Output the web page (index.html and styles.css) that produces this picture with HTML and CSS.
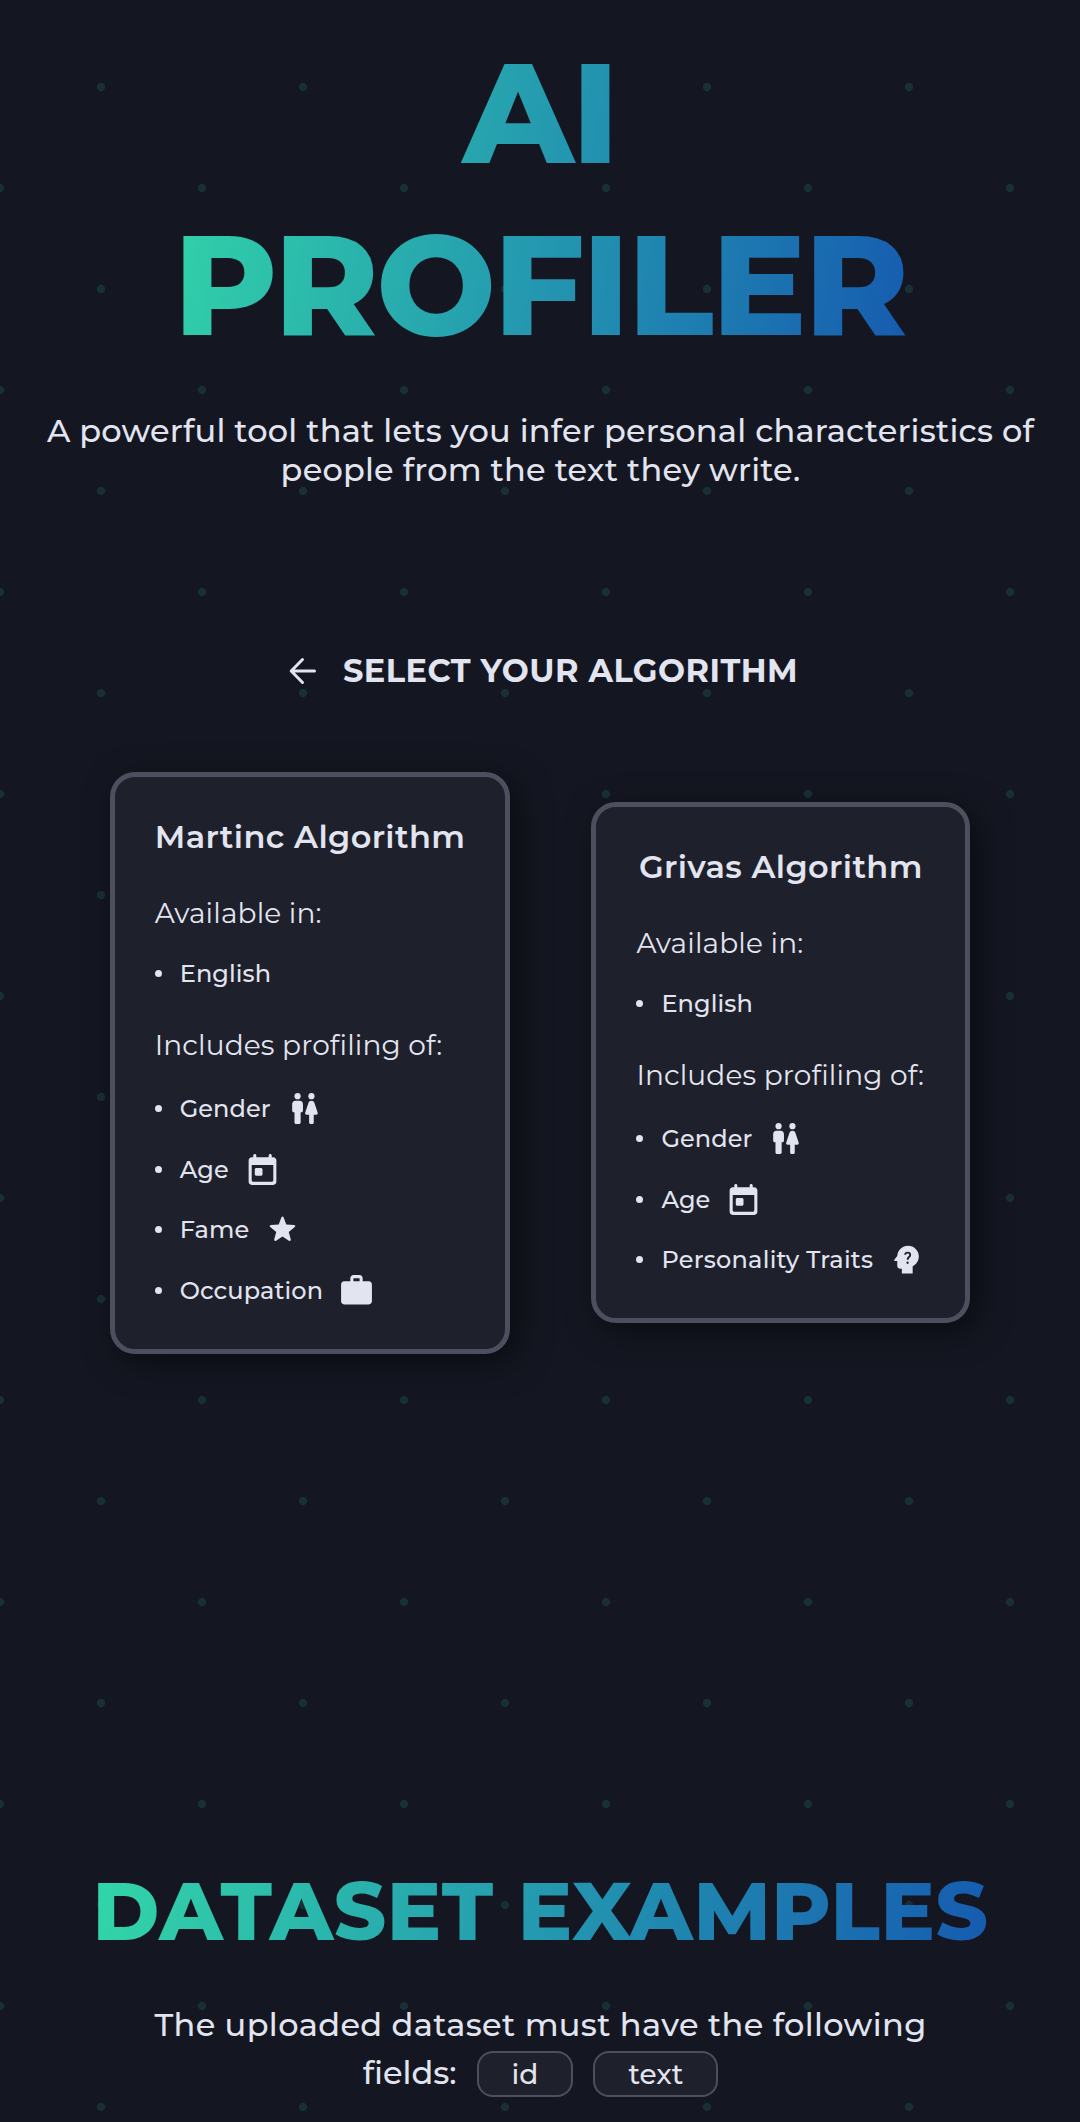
FILE: index.html
```html
<!DOCTYPE html>
<html lang="en">
<head>
<meta charset="utf-8">
<title>AI Profiler</title>
<link rel="stylesheet" href="styles.css">
</head>
<body>
<svg class="sprite" aria-hidden="true">
  <symbol id="wc" viewBox="0 0 24 24"><circle cx="7.5" cy="4" r="2"/><circle cx="16.500" cy="4" r="2"/><path d="M5.500 21v-6.500H5c-.55 0-1-.45-1-1V9c0-1.100.900-2 2-2h3c1.100 0 2 .900 2 2v4.500c0 .55-.45 1-1 1h-.5V21c0 .55-.45 1-1 1h-2c-.55 0-1-.45-1-1zM18 22h-2c-.28 0-1-.22-1-1v-5h-1.610c-.68 0-1.160-.67-.95-1.320l2.100-6.310C14.810 7.550 15.600 7 16.500 7s1.690.55 1.960 1.370l2.100 6.310c.21.65-.27 1.320-.95 1.320H18v5c0 .55-.22 1-1 1z"/></symbol>
  <symbol id="today" viewBox="0 0 24 24"><path d="M19 4h-1V3c0-.55-.45-1-1-1s-1 .45-1 1v1H8V3c0-.55-.45-1-1-1s-1 .45-1 1v1H5c-1.110 0-2 .9-2 2v14c0 1.100.890 2 2 2h14c1.100 0 2-.9 2-2V6c0-1.100-.9-2-2-2zm0 15c0 .55-.45 1-1 1H6c-.55 0-1-.45-1-1V9h14v10zM8 11h3c.55 0 1 .45 1 1v3c0 .55-.45 1-1 1H8c-.55 0-1-.45-1-1v-3c0-.55.45-1 1-1z"/></symbol>
  <symbol id="star" viewBox="0 0 24 24"><path d="M11.300 4.100c.3-.65 1.100-.65 1.400 0l1.750 4.700 4.950.2c.95.100 1.150.9.550 1.450l-3.900 3.100 1.300 4.850c.2.8-.55 1.350-1.200.9L12 16.600l-4.150 2.700c-.65.450-1.400-.1-1.200-.9l1.300-4.850-3.900-3.100C3.450 9.900 3.650 9.100 4.600 9l4.950-.2z"/></symbol>
  <symbol id="work" viewBox="0 0 24 24"><path d="M20 6h-4V4c0-1.110-.89-2-2-2h-4c-1.110 0-2 .89-2 2v2H4c-1.110 0-2 .89-2 2v11c0 1.110.890 2 2 2h16c1.110 0 2-.89 2-2V8c0-1.110-.89-2-2-2zm-6 0h-4V4h4v2z"/></symbol>
  <symbol id="mind" viewBox="0 0 24 24"><path d="M13 3C9.230 3 6.190 5.950 6 9.660l-1.920 2.530c-.24.330 0 .81.420.81H6v3c0 1.110.890 2 2 2h1v3h7v-4.690c2.370-1.120 4-3.510 4-6.310 0-3.860-3.120-7-7-7z"/><path class="cut" d="M11.100 8.900c.1-1 .8-1.400 1.600-1.400 1 0 1.700.6 1.700 1.500 0 1.400-1.700 1.400-1.700 3.100"/><circle class="cut-dot" cx="12.700" cy="14.100" r=".75"/></symbol>
</svg>
<main class="page">
  <header class="hero">
    <h1 class="title grad"><span>AI</span><br>PROFILER</h1>
    <p class="lead">A powerful tool that lets you infer personal characteristics of<br>people from the text they write.</p>
  </header>
  <div class="step">
    <svg class="back" viewBox="0 0 28 28"><path d="M25.500 14H2.200M13.500 2.500 2.200 14l11.300 11.500"/></svg>
    <h2 class="step-title">SELECT YOUR ALGORITHM</h2>
  </div>
  <section class="cards">
    <article class="card">
      <h3 class="name">Martinc Algorithm</h3>
      <p class="label">Available in:</p>
      <ul class="list"><li>English</li></ul>
      <p class="label">Includes profiling of:</p>
      <ul class="list traits">
        <li>Gender<svg class="icon"><use href="#wc"/></svg></li>
        <li>Age<svg class="icon"><use href="#today"/></svg></li>
        <li>Fame<svg class="icon"><use href="#star"/></svg></li>
        <li>Occupation<svg class="icon"><use href="#work"/></svg></li>
      </ul>
    </article>
    <article class="card">
      <h3 class="name">Grivas Algorithm</h3>
      <p class="label">Available in:</p>
      <ul class="list"><li>English</li></ul>
      <p class="label">Includes profiling of:</p>
      <ul class="list traits">
        <li>Gender<svg class="icon"><use href="#wc"/></svg></li>
        <li>Age<svg class="icon"><use href="#today"/></svg></li>
        <li class="long">Personality Traits<svg class="icon"><use href="#mind"/></svg></li>
      </ul>
    </article>
  </section>
  <section class="examples">
    <h2 class="heading grad">DATASET EXAMPLES</h2>
    <p class="fields-text">The uploaded dataset must have the following</p>
    <div class="fields"><span>fields:</span><code class="chip">id</code><code class="chip">text</code></div>
  </section>
</main>
</body>
</html>
```
FILE: styles.css
```css
* { box-sizing: border-box; }
body {
  margin: 0;
  color: #e2e4f0;
  font-family: Montserrat, Inter, sans-serif;
  font-weight: 500;
  background-color: #141721;
  background-image:
    radial-gradient(circle, #173036 4px, transparent 4.200px),
    radial-gradient(circle, #173036 4px, transparent 4.200px);
  background-size: 202px 202px;
  background-position: 0 -14px, 101px 87px;
}
h1, h2, h3, p, ul { margin: 0; padding: 0; }
.sprite { display: none; }
.page { height: 2122px; overflow: hidden; display: flex; flex-direction: column; align-items: center; }
.hero { display: flex; flex-direction: column; align-items: center; text-align: center; }
.grad {
  background: linear-gradient(100deg, #32d6a8, #2499b0 50%, #165bb0);
  -webkit-background-clip: text;
  background-clip: text;
  color: transparent;
  font-weight: 800;
}
.title { margin-top: 27px; font-size: 141.500px; line-height: 172px; letter-spacing: -2.400px; }
.lead { margin-top: 40px; padding-left: 1px; font-size: 32px; line-height: 39px; letter-spacing: 0.210px; white-space: nowrap; }
.step { margin-top: 162px; padding-left: 7px; display: flex; align-items: center; gap: 26px; }
.back { width: 28px; height: 28px; fill: none; stroke: #e2e4f0; stroke-width: 3; stroke-linecap: round; stroke-linejoin: round; }
.step-title { font-size: 32px; line-height: 39px; font-weight: 700; letter-spacing: 0.480px; }
.cards { margin-top: 82px; display: flex; align-items: center; gap: 81px; }
.card {
  padding: 40px 40px 29px;
  border: 5px solid #4d4f5e;
  border-radius: 25px;
  background: #1e202b;
  box-shadow: 8px 8px 32px rgba(0, 0, 0, 0.500);
}
.name { font-size: 32px; line-height: 39px; font-weight: 600; text-align: center; letter-spacing: 0.400px; white-space: nowrap; }
.label { margin-top: 40px; font-size: 28px; line-height: 34px; font-weight: 400; letter-spacing: 0.130px; white-space: nowrap; }
.list { list-style: none; margin-top: 24px; font-size: 24px; line-height: 39px; }
.list + .label { margin-top: 34.500px; }
.list li { display: flex; align-items: center; white-space: nowrap; letter-spacing: 0.100px; }
.list li.long { letter-spacing: 0.260px; }
.list li::before { content: ""; width: 7px; height: 7px; margin-right: 18px; border-radius: 50%; background: #e2e4f0; }
.traits { margin-top: 16.800px; margin-bottom: -0.800px; display: grid; grid-auto-rows: 60.500px; }
.icon { width: 37px; height: 37px; margin-left: 15px; fill: #e2e4f0; }
.cut { fill: none; stroke: #1e202b; stroke-width: 1.200; }
.cut-dot { fill: #1e202b; }
.examples { margin-top: 508px; padding-left: 1px; display: flex; flex-direction: column; align-items: center; }
.heading { font-size: 81px; line-height: 98px; letter-spacing: 0.500px; }
.fields-text { margin-top: 41px; font-size: 32px; line-height: 48px; letter-spacing: 0.370px; }
.fields { display: flex; align-items: center; gap: 20px; font-size: 32px; line-height: 48px; }
.chip { margin-top: 2px; padding: 0 33px; font: 500 28px/42px Montserrat, Inter, sans-serif; border: 2px solid #4d4f5e; border-radius: 16px; background: #1e202b; }
```
